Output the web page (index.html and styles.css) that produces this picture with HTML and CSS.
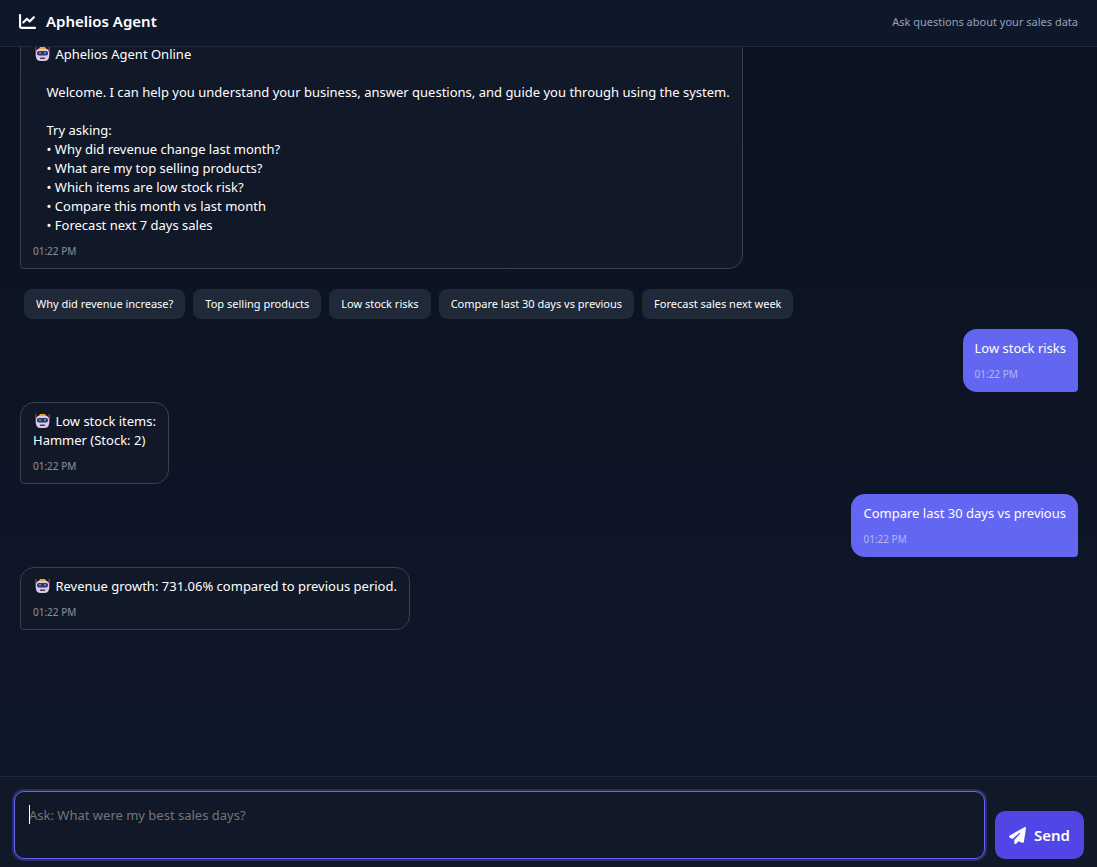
FILE: index.html
```html
<!DOCTYPE html>
<html lang="en">
<head>
    <meta charset="UTF-8">
    <meta name="viewport" content="width=device-width, initial-scale=1.0">
    <title>Aphelios Agent</title>
    <link rel="stylesheet" href="styles.css">
</head>
<body>

    <!-- Robot face, reused in every agent message -->
    <svg class="sprite" aria-hidden="true">
        <symbol id="robot" viewBox="0 0 30 28">
            <rect x="0" y="0" width="3" height="19" rx="1" fill="#b01f50"/>
            <rect x="27" y="0" width="3" height="19" rx="1" fill="#b01f50"/>
            <path d="M2 10Q3 3 10 3H20Q27 3 28 10V20Q27 28 19 28H11Q3 28 2 20Z" fill="#d9c8ea"/>
            <path d="M10 0H20L22 4H8Z" fill="#f5a623"/>
            <rect x="4" y="8" width="22" height="9" rx="4" fill="#31385f"/>
            <circle cx="10" cy="12" r="2" fill="#4d9fd6"/>
            <circle cx="20" cy="12" r="2" fill="#4d9fd6"/>
            <rect x="10" y="21" width="10" height="3" rx="1" fill="#4b3a62"/>
        </symbol>
    </svg>

    <div class="app">
        <header class="header">
            <h1 class="title">
                <svg class="icon" viewBox="0 0 512 512" aria-hidden="true"><path d="M64 64c0-17.7-14.3-32-32-32S0 46.3 0 64V400c0 44.2 35.8 80 80 80H480c17.7 0 32-14.3 32-32s-14.3-32-32-32H80c-8.800 0-16-7.200-16-16V64zm406.600 86.600c12.500-12.500 12.500-32.800 0-45.300s-32.800-12.500-45.300 0L320 210.700l-57.400-57.400c-12.500-12.500-32.800-12.500-45.300 0l-112 112c-12.500 12.500-12.500 32.800 0 45.300s32.800 12.500 45.300 0L240 221.300l57.400 57.400c12.500 12.500 32.800 12.500 45.300 0l128-128z"/></svg>
                Aphelios Agent
            </h1>
            <span class="subtitle">Ask questions about your sales data</span>
        </header>

        <main class="chat">
            <div class="message agent">
                <div class="text"><svg class="robot" aria-hidden="true"><use href="#robot"/></svg> Aphelios Agent Online

    Welcome. I can help you understand your business, answer questions, and guide you through using the system.

    Try asking:
    • Why did revenue change last month?
    • What are my top selling products?
    • Which items are low stock risk?
    • Compare this month vs last month
    • Forecast next 7 days sales</div>
                <div class="time">01:22 PM</div>
            </div>

            <div class="suggestions">
                <button type="button">Why did revenue increase?</button>
                <button type="button">Top selling products</button>
                <button type="button">Low stock risks</button>
                <button type="button">Compare last 30 days vs previous</button>
                <button type="button">Forecast sales next week</button>
            </div>

            <div class="message user">
                <div class="text">Low stock risks</div>
                <div class="time">01:22 PM</div>
            </div>

            <div class="message agent">
                <div class="text"><svg class="robot" aria-hidden="true"><use href="#robot"/></svg> Low stock items:
Hammer (Stock: 2)</div>
                <div class="time">01:22 PM</div>
            </div>

            <div class="message user">
                <div class="text">Compare last 30 days vs previous</div>
                <div class="time">01:22 PM</div>
            </div>

            <div class="message agent">
                <div class="text"><svg class="robot" aria-hidden="true"><use href="#robot"/></svg> Revenue growth: 731.06% compared to previous period.</div>
                <div class="time">01:22 PM</div>
            </div>
        </main>

        <form class="composer">
            <div class="field">
                <textarea id="question" aria-label="Question" placeholder="Ask: What were my best sales days?"></textarea>
                <span class="caret"></span>
            </div>
            <button type="submit" class="send">
                <svg class="icon" viewBox="0 0 512 512" aria-hidden="true"><path d="M498.100 5.600c10.100 7 15.400 19.100 13.500 31.200l-64 416c-1.500 9.700-7.400 18.200-16 23s-18.900 5.400-28 1.600L284 427.700l-68.500 74.100c-8.900 9.700-22.900 12.900-35.200 8.100S160 493.200 160 480V396.400c0-4 1.500-7.800 4.200-10.700L331.800 202.800c5.800-6.300 5.600-16-.4-22s-15.700-6.400-22-.7L106 360.800 17.700 316.600C7.100 311.300 .3 300.700 0 288.900s5.900-22.800 16.100-28.700l448-256c10.700-6.100 23.900-5.500 34 1.400z"/></svg>
                Send
            </button>
        </form>
    </div>

</body>
</html>
```

FILE: styles.css
```css
* {
    box-sizing: border-box;
}

body {
    margin: 0;
    background: #0f172a;
    color: #fff;
    font-family: "Segoe UI", "Noto Sans", sans-serif;
    font-size: 13px;
}

button, textarea {
    font-family: inherit;
}

.sprite {
    display: none;
}

.app {
    display: flex;
    flex-direction: column;
    height: 100vh;
}

/* Header */
.header {
    display: flex;
    flex-shrink: 0;
    justify-content: space-between;
    align-items: center;
    padding: 8px 19px 12px;
    background: #0f172a;
    border-bottom: 1px solid #1f2937;
}

.title {
    display: flex;
    align-items: center;
    gap: 10px;
    margin: 0;
    font-size: 15px;
    line-height: 26px;
    font-weight: 600;
}

.icon {
    width: 17px;
    height: 17px;
    fill: currentColor;
}

.subtitle {
    color: #94a3b8;
    font-size: 11px;
}

/* Messages, newest kept in view */
.chat {
    display: flex;
    flex: 1;
    flex-direction: column;
    justify-content: flex-end;
    gap: 10px;
    min-height: 0;
    padding: 20px 19px 146px 20px;
    overflow: hidden;
    background: linear-gradient(180deg, #0b111e, #0f172a);
}

.message {
    flex-shrink: 0;
    max-width: 75%;
    padding: 10px 12px;
    border-radius: 14px;
}

.agent {
    align-self: flex-start;
    padding: 9px 12px;
    background: #111827;
    border: 1px solid #374151;
    border-bottom-left-radius: 4px;
}

.user {
    align-self: flex-end;
    background: #6366f1;
    border-bottom-right-radius: 4px;
}

.text {
    line-height: 19px;
    white-space: pre-wrap;
}

.time {
    margin-top: 8px;
    font-size: 10px;
    line-height: 16px;
    opacity: 0.5;
}

.robot {
    width: 15px;
    height: 14px;
    margin: 0 2px;
    vertical-align: -2px;
}

.suggestions {
    display: flex;
    flex-wrap: wrap;
    flex-shrink: 0;
    gap: 8px;
    margin-top: 10px;
    padding: 0 4px;
}

.suggestions button {
    padding: 7px 12px;
    border: none;
    border-radius: 8px;
    background: #1f2937;
    color: #fff;
    font-size: 11px;
    line-height: 16px;
    cursor: pointer;
}

/* Composer */
.composer {
    display: flex;
    flex-shrink: 0;
    align-items: flex-end;
    gap: 10px;
    padding: 14px 13px 8px 14px;
    background: #111827;
    border-top: 1px solid #1f2937;
}

.field {
    position: relative;
    display: flex;
    flex: 1;
}

.field textarea {
    width: 100%;
    height: 68px;
    padding: 14px;
    border: 1px solid #6366f1;
    border-radius: 10px;
    outline: none;
    box-shadow: 0 0 0 2px rgba(99, 102, 241, 0.3);
    background: #111827;
    color: #fff;
    font-size: 13px;
    line-height: 19px;
    resize: none;
    caret-color: transparent;
}

.field textarea::placeholder {
    color: #757575;
}

.caret {
    position: absolute;
    top: 14px;
    left: 15px;
    width: 1px;
    height: 19px;
    background: #fff;
}

.send {
    display: flex;
    align-items: center;
    gap: 8px;
    height: 48px;
    padding: 0 14px;
    border: none;
    border-radius: 10px;
    background: #4f46e5;
    color: #fff;
    font-size: 15px;
    font-weight: 600;
    cursor: pointer;
}
```
